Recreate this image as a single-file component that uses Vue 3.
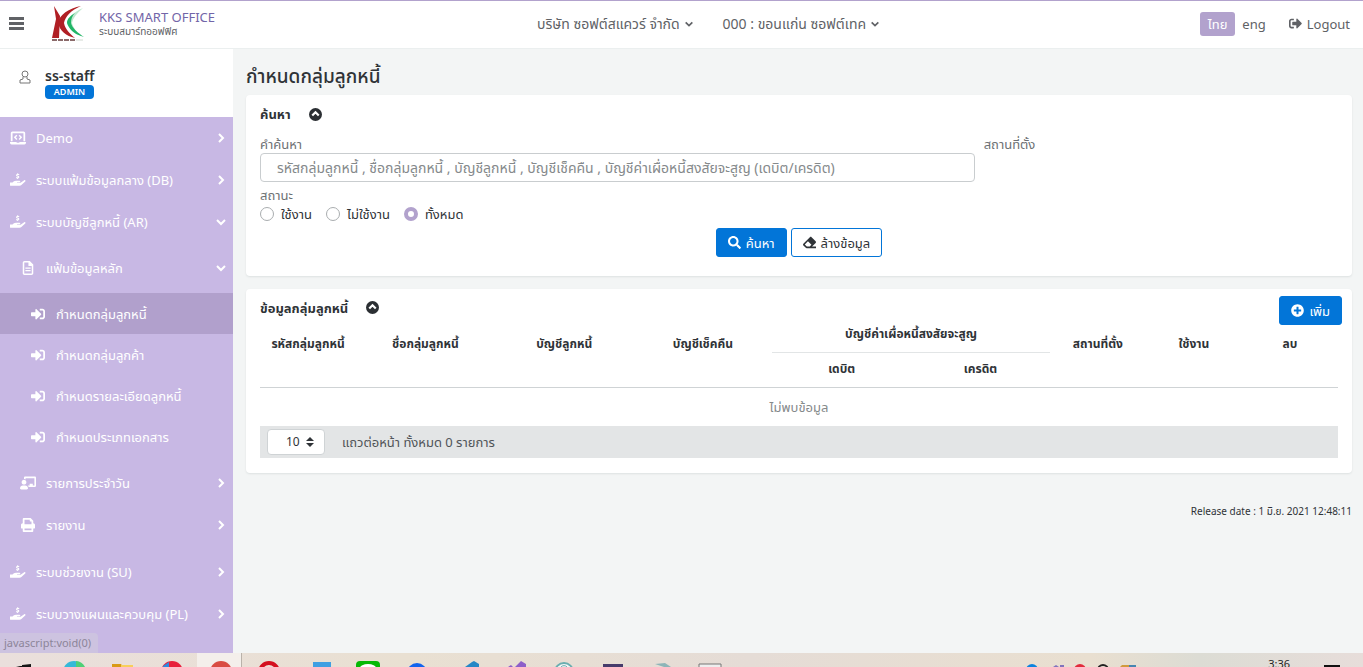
<script setup>
import { ref } from 'vue'

const keyword = ref('')
const status = ref('all')
const pageSize = ref('10')

const icons = {
  signin: 'M416 448h-84c-6.6 0-12-5.4-12-12v-40c0-6.6 5.4-12 12-12h84c17.7 0 32-14.3 32-32V160c0-17.7-14.3-32-32-32h-84c-6.6 0-12-5.4-12-12V76c0-6.6 5.4-12 12-12h84c53 0 96 43 96 96v192c0 53-43 96-96 96zm-47-201L201 79c-15-15-41-4.5-41 17v96H24c-13.3 0-24 10.7-24 24v96c0 13.3 10.7 24 24 24h136v96c0 21.5 26 32 41 17l168-168c9.3-9.4 9.3-24.6 0-34z',
  hand: 'M4 344h84l50-38c22-17 48-26 75-26h128c42 0 42 56 0 56h-78c-16 0-16 24 0 24h100c12 0 24-4 33-11l118-84c32-22 66 20 38 46L412 438c-20 16-42 26-68 26H4c-6 0-10-5-10-11V356c0-7 4-12 10-12zM258 10h36v26h38v38h-66c-10 0-10 16 0 18l36 10c48 14 44 86-8 92v26h-36v-26h-42v-38h70c12 0 12-16 0-20l-34-10c-50-14-46-84 6-90z',
  laptop: 'M96 0h448c35 0 64 29 64 64v320h-70V70H102v314H32V64c0-35 29-64 64-64zM0 416h256l18 28h92l18-28h256v32c0 35-29 64-64 64H64c-35 0-64-29-64-64zM254 128l40 40-62 62 62 62-40 40-102-102zM386 128l-40 40 62 62-62 62 40 40 102-102z',
  file: 'M64 0h192l128 128v320c0 35-29 64-64 64H64c-35 0-64-29-64-64V64C0 29 29 0 64 0zm-8 56v400h272V180H208V56zM96 240h192v44H96zm0 88h192v44H96z',
  teacher: 'M208 352c-3 0-5 0-8 1-13 4-26 7-40 7s-28-3-40-7c-3-1-5-1-8-1C50 352 0 403 0 464c0 27 22 48 48 48h224c27 0 48-21 48-48 0-61-50-112-112-112zM160 320c53 0 96-43 96-96s-43-96-96-96-96 43-96 96 43 96 96 96zM592 0H208c-27 0-48 22-48 49v47c24 0 45 7 64 18V64h352v288h-64v-64H384v64h-76c19 17 33 39 40 64h244c27 0 48-22 48-49V49c0-27-21-49-48-49z',
  print: 'M64 32C64 14 78 0 96 0h256l96 96v96c35 0 64 29 64 64v112c0 9-7 16-16 16h-48v96c0 18-14 32-32 32H96c-18 0-32-14-32-32v-96H16c-9 0-16-7-16-16V256c0-35 29-64 64-64zm64 32v160h256V128h-48c-9 0-16-7-16-16V64zm0 320v64h256v-64z'
}

const menu = [
  { icon: 'laptop', box: '0 0 640 512', text: 'Demo', arrow: 'right' },
  { icon: 'hand', box: '0 0 576 512', text: 'ระบบแฟ้มข้อมูลกลาง (DB)', arrow: 'right' },
  {
    icon: 'hand', box: '0 0 576 512', text: 'ระบบบัญชีลูกหนี้ (AR)', arrow: 'down',
    children: [
      {
        icon: 'file', box: '0 0 384 512', text: 'แฟ้มข้อมูลหลัก', arrow: 'down',
        children: [
          { text: 'กำหนดกลุ่มลูกหนี้', active: true },
          { text: 'กำหนดกลุ่มลูกค้า' },
          { text: 'กำหนดรายละเอียดลูกหนี้' },
          { text: 'กำหนดประเภทเอกสาร' }
        ]
      },
      { icon: 'teacher', box: '0 0 640 512', text: 'รายการประจำวัน', arrow: 'right' },
      { icon: 'print', box: '0 0 512 512', text: 'รายงาน', arrow: 'right' }
    ]
  },
  { icon: 'hand', box: '0 0 576 512', text: 'ระบบช่วยงาน (SU)', arrow: 'right' },
  { icon: 'hand', box: '0 0 576 512', text: 'ระบบวางแผนและควบคุม (PL)', arrow: 'right' }
]

const arrows = { right: 'M4 2l4 4-4 4', down: 'M2 4l4 4 4-4' }
</script>

<template>
  <div class="screen">
    <header class="topbar">
      <button class="burger" aria-label="Menu"><span></span><span></span><span></span></button>
      <svg class="logo" viewBox="0 0 34 37" aria-hidden="true">
        <path d="M3 1L9 11 8 33H1L5 14z" fill="#b01f24" />
        <path d="M30 1C18 3 8 10 7 18c2 8 8 13 17 15-5-4-10-9-11-15C14 12 20 5 30 1z" fill="#b01f24" />
        <path d="M32 3c-9 4-15 9-16 15 2 6 8 11 15 13-5-4-9-8-10-13 1-5 5-10 11-15z" fill="#bfe8cf" />
        <path d="M24 8c-5 3-8 6-8 10 2 6 7 11 14 13l3 1c-6-4-12-9-13-14 0-4 1-7 4-10z" fill="#22b566" />
        <path d="M1 35h24" stroke="#8b6a6a" stroke-width="2" stroke-dasharray="5 1" />
        <path d="M25 35h7" stroke="#cfd8d0" stroke-width="1" />
      </svg>
      <div class="brand">
        <strong>KKS SMART OFFICE</strong>
        <span>ระบบสมาร์ทออฟฟิศ</span>
      </div>
      <nav class="orgs">
        <button>บริษัท ซอฟต์สแควร์ จำกัด<svg viewBox="0 0 12 12"><path :d="arrows.down" /></svg></button>
        <button>000 : ขอนแก่น ซอฟต์เทค<svg viewBox="0 0 12 12"><path :d="arrows.down" /></svg></button>
      </nav>
      <div class="account">
        <button class="lang on">ไทย</button>
        <button class="lang">eng</button>
        <a href="#" class="logout">
          <svg viewBox="0 0 512 512"><path d="M497 273L329 441c-15 15-41 4.5-41-17v-96H152c-13.3 0-24-10.7-24-24v-96c0-13.3 10.7-24 24-24h136V88c0-21.4 25.9-32 41-17l168 168c9.3 9.4 9.3 24.6 0 34zM192 436v-40c0-6.6-5.4-12-12-12H96c-17.7 0-32-14.3-32-32V160c0-17.7 14.3-32 32-32h84c6.6 0 12-5.4 12-12V76c0-6.6-5.4-12-12-12H96c-53 0-96 43-96 96v192c0 53 43 96 96 96h84c6.6 0 12-5.4 12-12z" /></svg>
          Logout
        </a>
      </div>
    </header>

    <div class="body">
      <aside class="sidebar">
        <div class="user">
          <svg viewBox="0 0 12 14"><circle cx="6" cy="4" r="3" /><path d="M4 7v2L1 10v3h10v-3L8 9V7" /></svg>
          <div>
            <strong>ss-staff</strong>
            <span class="badge">ADMIN</span>
          </div>
        </div>
        <ul class="menu">
          <li v-for="item in menu" :key="item.text">
            <a href="#" class="row">
              <svg class="ico" :viewBox="item.box"><path :d="icons[item.icon]" fill-rule="evenodd" /></svg>
              <span>{{ item.text }}</span>
              <svg class="arrow" viewBox="0 0 12 12"><path :d="arrows[item.arrow]" /></svg>
            </a>
            <ul v-if="item.children" class="sub">
              <li v-for="child in item.children" :key="child.text">
                <a href="#" class="row second">
                  <svg class="ico" :viewBox="child.box"><path :d="icons[child.icon]" fill-rule="evenodd" /></svg>
                  <span>{{ child.text }}</span>
                  <svg class="arrow" viewBox="0 0 12 12"><path :d="arrows[child.arrow]" /></svg>
                </a>
                <ul v-if="child.children" class="sub">
                  <li v-for="leaf in child.children" :key="leaf.text">
                    <a href="#" class="row third" :class="{ active: leaf.active }">
                      <svg class="ico" viewBox="0 0 512 512"><path :d="icons.signin" /></svg>
                      <span>{{ leaf.text }}</span>
                    </a>
                  </li>
                </ul>
              </li>
            </ul>
          </li>
        </ul>
      </aside>

      <main class="content">
        <h1>กำหนดกลุ่มลูกหนี้</h1>

        <section class="card">
          <div class="card-head">
            <h2>ค้นหา</h2>
            <button class="fold" aria-label="ย่อ"><svg viewBox="0 0 12 12"><path d="M3 7l3-3 3 3" /></svg></button>
          </div>
          <form @submit.prevent>
            <div class="fields">
              <div class="field">
                <label for="keyword">คำค้นหา</label>
                <input id="keyword" v-model="keyword" type="text" placeholder="รหัสกลุ่มลูกหนี้ , ชื่อกลุ่มลูกหนี้ , บัญชีลูกหนี้ , บัญชีเช็คคืน , บัญชีค่าเผื่อหนี้สงสัยจะสูญ (เดบิต/เครดิต)" />
              </div>
              <span class="caption">สถานที่ตั้ง</span>
            </div>
            <fieldset>
              <legend>สถานะ</legend>
              <label><input v-model="status" type="radio" name="status" value="active" />ใช้งาน</label>
              <label><input v-model="status" type="radio" name="status" value="inactive" />ไม่ใช้งาน</label>
              <label><input v-model="status" type="radio" name="status" value="all" />ทั้งหมด</label>
            </fieldset>
            <div class="actions">
              <button type="submit" class="btn primary">
                <svg viewBox="0 0 512 512"><path d="M505 442.700L405.300 343c-4.500-4.500-10.600-7-17-7H372c27.600-35.300 44-79.700 44-128C416 93.100 322.900 0 208 0S0 93.100 0 208s93.100 208 208 208c48.300 0 92.700-16.400 128-44v16.300c0 6.400 2.500 12.500 7 17l99.700 99.700c9.400 9.400 24.600 9.400 33.900 0l28.300-28.300c9.400-9.400 9.400-24.600.1-34zM208 336c-70.700 0-128-57.200-128-128 0-70.700 57.200-128 128-128 70.700 0 128 57.200 128 128 0 70.700-57.200 128-128 128z" /></svg>
                ค้นหา
              </button>
              <button type="reset" class="btn outline">
                <svg viewBox="0 0 512 512"><path d="M497.900 273.900c18.700-18.700 18.700-49.100 0-67.900l-160-160c-18.700-18.700-49.100-18.700-67.900 0l-256 256c-18.700 18.700-18.700 49.100 0 67.900l96 96A48 48 0 0 0 144 480h356c6.600 0 12-5.400 12-12v-40c0-6.600-5.400-12-12-12H355.900l142-142.100zM195.300 211.300l137.400 137.400L265.400 416H150.600l-80-80z" fill-rule="evenodd" /></svg>
                ล้างข้อมูล
              </button>
            </div>
          </form>
        </section>

        <section class="card list">
          <div class="card-head">
            <h2>ข้อมูลกลุ่มลูกหนี้</h2>
            <button class="fold" aria-label="ย่อ"><svg viewBox="0 0 12 12"><path d="M3 7l3-3 3 3" /></svg></button>
            <button class="btn primary add">
              <svg viewBox="0 0 512 512"><path d="M256 8C119 8 8 119 8 256s111 248 248 248 248-111 248-248S393 8 256 8zm144 276c0 6.600-5.400 12-12 12h-92v92c0 6.600-5.400 12-12 12h-56c-6.600 0-12-5.400-12-12v-92h-92c-6.600 0-12-5.400-12-12v-56c0-6.600 5.400-12 12-12h92v-92c0-6.600 5.400-12 12-12h56c6.600 0 12 5.400 12 12v92h92c6.600 0 12 5.400 12 12v56z" /></svg>
              เพิ่ม
            </button>
          </div>
          <table>
            <colgroup>
              <col class="narrow" /><col /><col /><col /><col /><col /><col class="narrow" /><col class="narrow" /><col class="narrow" />
            </colgroup>
            <thead>
              <tr>
                <th rowspan="2">รหัสกลุ่มลูกหนี้</th>
                <th rowspan="2">ชื่อกลุ่มลูกหนี้</th>
                <th rowspan="2">บัญชีลูกหนี้</th>
                <th rowspan="2">บัญชีเช็คคืน</th>
                <th colspan="2" class="group">บัญชีค่าเผื่อหนี้สงสัยจะสูญ</th>
                <th rowspan="2">สถานที่ตั้ง</th>
                <th rowspan="2">ใช้งาน</th>
                <th rowspan="2">ลบ</th>
              </tr>
              <tr>
                <th>เดบิต</th>
                <th>เครดิต</th>
              </tr>
            </thead>
            <tbody>
              <tr><td colspan="9">ไม่พบข้อมูล</td></tr>
            </tbody>
          </table>
          <div class="pager">
            <div class="size">
              <select id="size" v-model="pageSize"><option>10</option><option>25</option><option>50</option></select>
              <svg viewBox="0 0 8 10" aria-hidden="true"><path d="M0 4l4-4 4 4zM0 6l4 4 4-4z" /></svg>
            </div>
            <label for="size">แถวต่อหน้า ทั้งหมด 0 รายการ</label>
          </div>
        </section>

        <footer>Release date : 1 มิ.ย. 2021 12:48:11</footer>
      </main>
      <div class="hint">javascript:void(0)</div>
    </div>

    <div class="taskbar">
      <svg viewBox="0 0 760 14" class="apps" aria-hidden="true">
        <rect x="197" width="44" height="14" fill="#f4efeb" />
        <path d="M241.500 0v14" stroke="#b9b2aa" />
        <path d="M16 14l4-1h5v1zM22 12l9-1v3h-9z" fill="#161616" />
        <circle cx="74" cy="19" r="11" fill="#35b9d8" /><path d="M76 8a11 11 0 0 1 9 6h-9z" fill="#4fd077" />
        <path d="M112 11h9l2 3h-11z" fill="#d99a16" /><path d="M121 12h12v2h-12z" fill="#f8cf5a" />
        <circle cx="172" cy="19" r="11" fill="#e8203c" /><path d="M163 13l6-4v5h-6z" fill="#2d8be0" />
        <circle cx="221" cy="19" r="11" fill="#d94c43" />
        <circle cx="269" cy="19" r="9" fill="none" stroke="#d40f1f" stroke-width="4" />
        <path d="M313 9h18v5h-18z" fill="#3f9fe2" />
        <rect x="356" y="8" width="24" height="12" rx="4" fill="#06b906" /><ellipse cx="368" cy="15" rx="8" ry="4" fill="#fff" />
        <circle cx="417" cy="20" r="10" fill="#1264ee" />
        <path d="M465 14l7-5 2-1 5 3v3z" fill="#2688c6" />
        <path d="M508 14l3-2 2 2zM515 14l6-6 5 3v3z" fill="#8d5fc9" />
        <circle cx="564" cy="19" r="9" fill="#f1f6f6" stroke="#6aaeb0" stroke-width="2" /><path d="M561 14a4 4 0 0 1 6 0" fill="none" stroke="#6aaeb0" />
        <path d="M603 11h20v3h-20z" fill="#463b6b" />
        <path d="M655 11l10-1 6 4h-7z" fill="#8db5b8" />
        <path d="M699 14v-3h22v3" fill="#eee" stroke="#777" />
      </svg>
      <svg viewBox="0 0 140 14" class="tray" aria-hidden="true">
        <circle cx="12" cy="17" r="6" fill="#0b83df" /><path d="M33 14l3-2 3 2zM40 14v-2h4v2z" fill="#8074bd" />
        <circle cx="60" cy="17" r="6" fill="#e22b3c" /><circle cx="83" cy="17" r="5" fill="none" stroke="#222" stroke-width="2" />
        <path d="M100 14l2-2h8v2z" fill="#d09a3d" /><path d="M109 12h7v2h-7z" fill="#4685b1" />
      </svg>
      <time>3:36</time>
      <span class="notice"></span>
    </div>
  </div>
</template>

<style>
body { margin: 0; }
</style>

<style scoped>
* { box-sizing: border-box; }
.screen {
  min-height: 100vh;
  display: flex;
  flex-direction: column;
  font: 13px/20px "Noto Sans", "Noto Sans Thai", sans-serif;
  color: #2f3337;
}
button, input, select { font: inherit; color: inherit; }
button { padding: 0; border: 0; background: none; cursor: pointer; }
a { color: inherit; text-decoration: none; }
ul { list-style: none; margin: 0; padding: 0; }
h1, h2 { margin: 0; }
svg { flex: none; fill: currentColor; }

.topbar {
  height: 49px;
  border-top: 1px solid #b2a2cd;
  border-bottom: 1px solid #ebefef;
  display: grid;
  grid-template-columns: 24px 34px 1fr auto 1fr;
  align-items: center;
  padding: 0 13px 2px 9px;
  background: #fff;
  color: #606266;
}
.burger { width: 15px; display: grid; gap: 2px; }
.burger span { height: 3px; background: #606266; }
.logo { width: 34px; height: 37px; margin-left: 18px; }
.brand { margin-left: 32px; display: grid; }
.brand strong { font-weight: 400; font-size: 13px; line-height: 14px; color: #7265a8; }
.brand span { font-size: 10px; line-height: 14px; }
.orgs { display: flex; gap: 29px; font-size: 14px; }
.orgs button { display: flex; align-items: center; gap: 4px; }
.orgs svg { width: 10px; height: 10px; fill: none; stroke: currentColor; stroke-width: 2; }
.account { display: flex; justify-content: flex-end; align-items: center; }
.lang { height: 24px; padding: 0 7px; border-radius: 3px; }
.lang.on { padding: 0 8px; background: #b2a2cd; color: #fff; }
.logout { display: flex; align-items: center; gap: 5px; margin-left: 16px; }
.logout svg { width: 13px; height: 13px; }

.body { flex: 1; display: flex; position: relative; background: #f3f5f5; }
.sidebar { width: 233px; flex: none; background: #c8b8e4; color: #fff; }
.user { height: 68px; background: #fff; color: #2f3337; display: flex; padding: 17px 19px; gap: 14px; }
.user svg { width: 12px; height: 14px; margin-top: 4px; fill: none; stroke: #777; }
.user div { display: grid; justify-items: start; align-content: start; }
.user strong { font-weight: 600; font-size: 14px; line-height: 19px; }
.badge { background: #0275d8; color: #fff; border-radius: 4px; width: 49px; text-align: center; font-weight: 600; font-size: 9px; line-height: 14px; }
.row { height: 42px; display: flex; align-items: center; padding: 0 6px 0 10px; }
.row span { flex: 1; margin-left: 10px; white-space: nowrap; }
.ico { width: 16px; height: 14px; }
.row .arrow { width: 12px; height: 12px; fill: none; stroke: currentColor; stroke-width: 2; }
.second { padding-left: 20px; }
.third { height: 41px; padding-left: 30px; }
.third.active { background: #b1a0cc; }
.sub { padding: 4px 0 5px; }
.hint {
  position: absolute;
  left: 0;
  bottom: 0;
  padding: 0 7px 0 4px;
  border-top-right-radius: 4px;
  background: #cdc3e0;
  color: #8c8599;
  font-size: 11px;
  line-height: 20px;
}

.content { flex: 1; min-width: 0; padding: 12px 11px 0 13px; }
h1 { font-size: 19px; line-height: 30px; padding-bottom: 4px; font-weight: 500; }
.card { background: #fff; border-radius: 4px; box-shadow: 0 1px 2px #dde1e1; padding: 9px 14px 19px; }
.card-head { display: flex; align-items: center; height: 20px; }
h2 { font-size: 13px; line-height: 20px; font-weight: 700; }
.fold { width: 13px; height: 13px; margin-left: 18px; border-radius: 50%; background: #2b2f33; display: flex; }
.fold svg { width: 13px; height: 13px; fill: none; stroke: #fff; stroke-width: 2; }
form { padding-top: 11px; color: #6d7174; }
.fields { display: grid; grid-template-columns: 2fr 1fr; column-gap: 6px; line-height: 18px; }
.caption { padding-left: 3px; }
.field { display: grid; }
.field input { height: 29px; border: 1px solid #c9cdcf; border-radius: 4px; padding: 0 16px; background: #fff; width: 100%; font-size: 14px; }
.field input::placeholder { color: #85898b; opacity: 1; }
fieldset { border: 0; margin: 0; padding: 4px 0 0; display: flex; flex-wrap: wrap; column-gap: 14px; }
legend { padding: 0; float: left; width: 100%; line-height: 18px; }
fieldset label { display: flex; align-items: center; gap: 7px; color: #2f3337; line-height: 20px; }
fieldset input { appearance: none; width: 14px; height: 14px; margin: 0; border: 1px solid #a9adaf; border-radius: 50%; background: #fff; }
fieldset input:checked { border: 4px solid #b2a2cd; }
.actions { display: flex; justify-content: center; gap: 4px; margin-top: 4px; }
.btn { height: 29px; padding: 0 11px; border: 1px solid #0275d8; border-radius: 3px; display: flex; align-items: center; gap: 5px; white-space: nowrap; }
.btn svg { width: 13px; height: 13px; }
.primary { background: #0275d8; color: #fff; }
.outline { background: #fff; color: #2f3337; }
.list { margin-top: 13px; padding-bottom: 15px; }
.list .card-head { align-items: flex-start; }
.list .fold { margin-top: 3px; }
.add { margin: -2px -4px 0 auto; }
table { width: 100%; border-collapse: collapse; table-layout: fixed; }
col { width: 13%; }
col.narrow { width: 9%; }
th { padding: 5px 0 7px; font-weight: 700; font-size: 12px; line-height: 22px; vertical-align: top; border-bottom: 1px solid #cfd3d5; }
th[rowspan] { padding-top: 15px; }
th.group { border-bottom-color: #e2e5e6; }
td { padding: 9px 0; text-align: center; color: #85898b; }
.pager { display: flex; align-items: center; gap: 17px; height: 32px; padding: 0 7px; background: #e3e5e6; color: #505458; }
.size { display: grid; align-items: center; color: #2f3337; }
.size select { grid-area: 1 / 1; appearance: none; width: 58px; height: 26px; padding: 0 18px; border: 1px solid #cfd3d5; border-radius: 4px; background: #fff; font-size: 12px; }
.size svg { grid-area: 1 / 1; justify-self: end; margin-right: 11px; width: 8px; height: 10px; pointer-events: none; }
footer { margin-top: 28px; text-align: right; font-size: 10px; }

.taskbar {
  height: 14px;
  overflow: hidden;
  display: flex;
  background: linear-gradient(90deg, #eadfdc, #e9e0d2 30%, #e5dcd6 55%, #e9dfd0 80%, #dcdcd4 88%, #e7ddda);
}
.apps { width: 760px; height: 14px; }
.tray { width: 140px; height: 14px; margin-left: auto; }
time { margin: 4px 0 0 108px; font-size: 11px; line-height: 14px; color: #222; }
.notice { width: 16px; height: 4px; margin: 12px 23px 0 34px; background: #111; }
</style>
